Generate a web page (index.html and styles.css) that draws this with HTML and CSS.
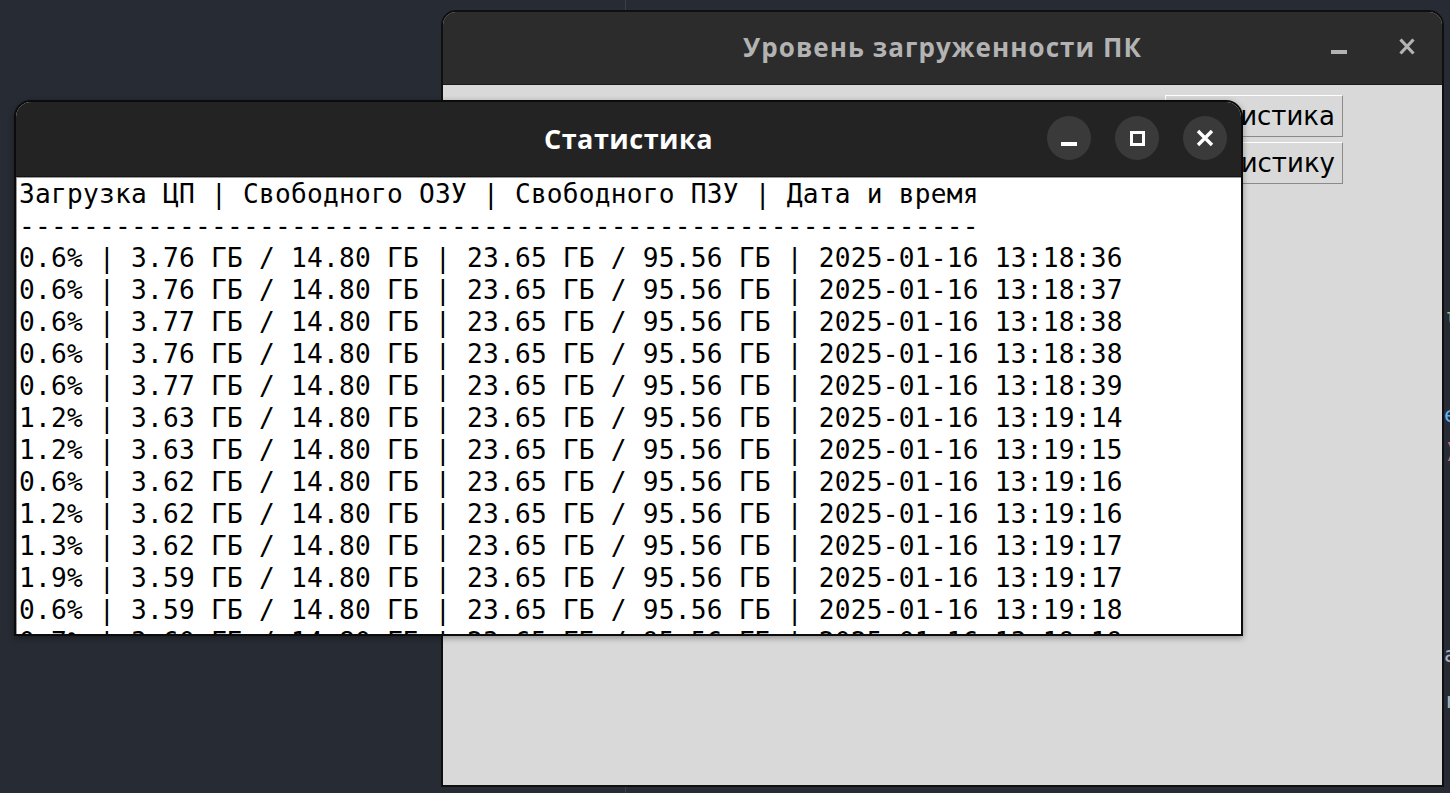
FILE: index.html
```html
<!DOCTYPE html>
<html lang="ru">
<head>
<meta charset="utf-8">
<title>Статистика</title>
<link rel="stylesheet" href="styles.css">
</head>
<body>
<div class="desktop">
  <div class="gutter-line"></div>
  <div class="code-peek">
    <span class="peek p-green">ι</span>
    <span class="peek p-blue">e</span>
    <span class="peek p-red">)</span>
    <span class="peek p-gray1">a</span>
    <span class="peek p-gray2">r</span>
  </div>

  <section class="window back-window">
    <header class="titlebar back-titlebar">
      <span class="back-title">Уровень загруженности ПК</span>
      <div class="back-controls">
        <span class="back-min"></span>
        <svg class="back-close" width="16" height="17" viewBox="0 0 16 17"><path d="M1.5 1.5 L14.5 15.5 M14.5 1.5 L1.5 15.5" stroke="#b3b3b3" stroke-width="3.2" fill="none"/></svg>
      </div>
    </header>
    <div class="back-content">
      <button class="tk-btn">Статистика</button>
      <button class="tk-btn">Очистить статистику</button>
    </div>
  </section>

  <section class="window front-window">
    <header class="titlebar front-titlebar">
      <span class="front-title">Статистика</span>
      <div class="front-controls">
        <span class="circle-btn"><span class="ic-min"></span></span>
        <span class="circle-btn"><span class="ic-max"></span></span>
        <span class="circle-btn">
          <svg width="18" height="18" viewBox="0 0 18 18"><path d="M2 2 L16 16 M16 2 L2 16" stroke="#ffffff" stroke-width="3.4" fill="none"/></svg>
        </span>
      </div>
    </header>
    <pre class="log">Загрузка ЦП | Свободного ОЗУ | Свободного ПЗУ | Дата и время
------------------------------------------------------------
0.6% | 3.76 ГБ / 14.80 ГБ | 23.65 ГБ / 95.56 ГБ | 2025-01-16 13:18:36
0.6% | 3.76 ГБ / 14.80 ГБ | 23.65 ГБ / 95.56 ГБ | 2025-01-16 13:18:37
0.6% | 3.77 ГБ / 14.80 ГБ | 23.65 ГБ / 95.56 ГБ | 2025-01-16 13:18:38
0.6% | 3.76 ГБ / 14.80 ГБ | 23.65 ГБ / 95.56 ГБ | 2025-01-16 13:18:38
0.6% | 3.77 ГБ / 14.80 ГБ | 23.65 ГБ / 95.56 ГБ | 2025-01-16 13:18:39
1.2% | 3.63 ГБ / 14.80 ГБ | 23.65 ГБ / 95.56 ГБ | 2025-01-16 13:19:14
1.2% | 3.63 ГБ / 14.80 ГБ | 23.65 ГБ / 95.56 ГБ | 2025-01-16 13:19:15
0.6% | 3.62 ГБ / 14.80 ГБ | 23.65 ГБ / 95.56 ГБ | 2025-01-16 13:19:16
1.2% | 3.62 ГБ / 14.80 ГБ | 23.65 ГБ / 95.56 ГБ | 2025-01-16 13:19:16
1.3% | 3.62 ГБ / 14.80 ГБ | 23.65 ГБ / 95.56 ГБ | 2025-01-16 13:19:17
1.9% | 3.59 ГБ / 14.80 ГБ | 23.65 ГБ / 95.56 ГБ | 2025-01-16 13:19:17
0.6% | 3.59 ГБ / 14.80 ГБ | 23.65 ГБ / 95.56 ГБ | 2025-01-16 13:19:18
0.7% | 3.60 ГБ / 14.80 ГБ | 23.65 ГБ / 95.56 ГБ | 2025-01-16 13:19:19</pre>
  </section>
</div>
</body>
</html>
```

FILE: styles.css
```css
* { box-sizing: border-box; }

html, body {
  margin: 0;
  padding: 0;
  width: 1450px;
  height: 793px;
  overflow: hidden;
  background: #272b33;
}

.desktop {
  position: relative;
  width: 1450px;
  height: 793px;
  background: #272b33;
  font-family: "DejaVu Sans", sans-serif;
}

.gutter-line {
  position: absolute;
  left: 625px;
  top: 0;
  width: 1px;
  height: 793px;
  background: #3a3f4a;
}

.code-peek {
  position: absolute;
  left: 1443px;
  top: 0;
  width: 20px;
  height: 793px;
  font-family: "DejaVu Sans Mono", monospace;
  font-size: 22px;
}

.peek { position: absolute; left: 1px; line-height: 1; }
.p-green { top: 306px; color: #98c379; }
.p-blue  { top: 404px; color: #61afef; }
.p-red   { top: 440px; color: #e06c75; }
.p-gray1 { top: 644px; color: #abb2bf; }
.p-gray2 { top: 690px; color: #abb2bf; }

.window {
  position: absolute;
  display: flex;
  flex-direction: column;
  overflow: hidden;
}

/* ---------- back window ---------- */
.back-window {
  left: 441px;
  top: 10px;
  width: 1003px;
  height: 777px;
  border: 2px solid #0f0f0f;
  border-radius: 15px 15px 0 0;
  background: #d9d9d9;
}

.back-titlebar {
  position: relative;
  height: 73px;
  flex: none;
  background: #2c2c2c;
  border-bottom: 1px solid #1c1c1c;
  display: flex;
  align-items: center;
  justify-content: center;
}

.back-title {
  font-family: "Open Sans", "Noto Sans", sans-serif;
  font-weight: 700;
  font-size: 26px;
  color: #b3b3b3;
  letter-spacing: 1.05px;
  margin-top: -2px;
}

.back-controls {
  position: absolute;
  right: 27px;
  top: 26px;
  display: flex;
  align-items: flex-end;
  gap: 52px;
}

.back-min {
  display: block;
  width: 16px;
  height: 4px;
  background: #b3b3b3;
  margin-bottom: 1px;
}

.back-close { display: block; }

.back-content {
  flex: 1;
  background: #d9d9d9;
  display: flex;
  flex-direction: column;
  align-items: flex-end;
  gap: 5px;
  padding: 10px 99px 0 0;
}

.tk-btn {
  height: 42px;
  min-width: 175px;
  padding: 0 7px 0 10px;
  font-family: "DejaVu Sans", sans-serif;
  font-size: 26px;
  color: #000;
  background: #d9d9d9;
  border: 1px solid;
  border-color: #ffffff #8a8a8a #8a8a8a #ffffff;
  border-radius: 0;
  text-align: right;
  line-height: 38px;
}

/* ---------- front window ---------- */
.front-window {
  left: 14px;
  top: 100px;
  width: 1229px;
  height: 536px;
  border: 2px solid #0b0b0b;
  border-radius: 17px 17px 0 0;
  background: #ffffff;
  box-shadow: 0 2px 6px rgba(0, 0, 0, 0.35);
}

.front-titlebar {
  position: relative;
  height: 75px;
  flex: none;
  background: #232323;
  border-bottom: 1px solid #141414;
  display: flex;
  align-items: center;
  justify-content: center;
}

.front-title {
  font-family: "Open Sans", "Noto Sans", sans-serif;
  font-weight: 700;
  font-size: 27px;
  letter-spacing: 0.5px;
  color: #ffffff;
  margin-top: -2px;
}

.front-controls {
  position: absolute;
  right: 14px;
  top: 14px;
  display: flex;
  gap: 24px;
}

.circle-btn {
  width: 44px;
  height: 44px;
  border-radius: 50%;
  background: #3a3a3a;
  display: flex;
  align-items: center;
  justify-content: center;
}

.ic-min {
  display: block;
  width: 16px;
  height: 4px;
  background: #ffffff;
  margin-top: 12px;
}

.ic-max {
  display: block;
  width: 15px;
  height: 15px;
  border: 3px solid #ffffff;
}

.log {
  flex: 1;
  margin: 0;
  padding: 0 0 0 2px;
  background: #ffffff;
  border-top: 1px solid #9a9a9a;
  border-left: 1px solid #9a9a9a;
  overflow: hidden;
  font-family: "DejaVu Sans Mono", monospace;
  font-size: 26.2px;
  letter-spacing: 0.23px;
  line-height: 32px;
  color: #000000;
  white-space: pre;
}
```
